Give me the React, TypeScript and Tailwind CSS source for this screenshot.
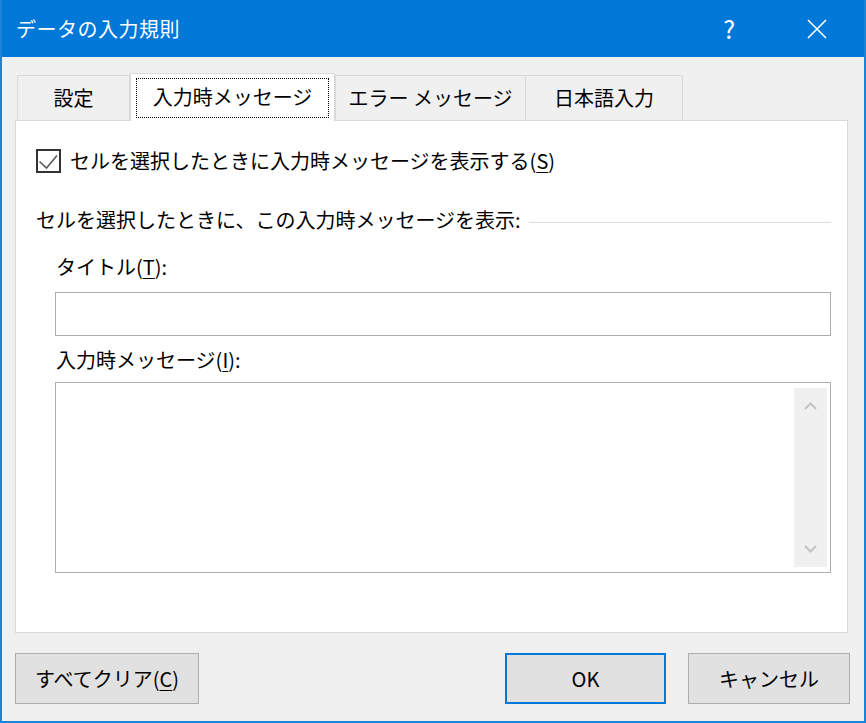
import React from 'react';

const font = { fontFamily: '"Noto Sans CJK JP", "Noto Sans", sans-serif' };

const Key = ({ k }: { k: string }) => (
  <>
    (<span className="underline underline-offset-[3px] decoration-1">{k}</span>)
  </>
);

const Tab = ({ label, w, active = false, className = '' }: { label: string; w: string; active?: boolean; className?: string }) =>
  active ? (
    <div className={`relative z-10 -mb-px flex h-[48px] items-center justify-center border border-b-0 border-[#d9d9d9] bg-white ${w} ${className}`}>
      <div className="pointer-events-none absolute top-[4px] right-[5px] bottom-[3px] left-[5px] border border-dotted border-black" />
      <span className="pb-[2px]">{label}</span>
    </div>
  ) : (
    <div className={`flex h-[45px] items-center justify-center border border-b-0 border-[#d9d9d9] bg-[#f0f0f0] ${w} ${className}`}>
      <span>{label}</span>
    </div>
  );

const Button = ({ children, w, primary = false }: { children: React.ReactNode; w: string; primary?: boolean }) => (
  <button
    type="button"
    className={`flex h-[51px] items-center justify-center bg-[#e1e1e1] text-[20px] text-black ${w} ${
      primary ? 'border-2 border-[#0078d7]' : 'border border-[#adadad]'
    }`}
  >
    {children}
  </button>
);

export default function App() {
  return (
    <div
      style={font}
      className="flex h-[723px] w-[866px] flex-col border-2 border-t-0 border-[#1883d7] bg-[#f0f0f0] text-[20px] leading-[28px] text-black"
    >
      {/* title bar */}
      <div className="flex h-[57px] shrink-0 items-center bg-[#0078d7] pl-[14px] text-white">
        <span className="text-[20px] tracking-[0.5px]">データの入力規則</span>
        <span className="ml-auto mr-[72px] text-[25px] leading-none">?</span>
        <svg width="20" height="20" viewBox="0 0 20 20" className="mr-[37px]">
          <path d="M1 1 L19 19 M19 1 L1 19" stroke="white" strokeWidth="1.6" fill="none" />
        </svg>
      </div>

      <div className="flex flex-1 flex-col pr-[14px] pl-[13px] pt-[16px]">
        {/* tabs */}
        <div className="flex h-[47px] items-end pl-[2px]">
          <Tab label="設定" w="w-[113px]" />
          <Tab label="入力時メッセージ" w="w-[205px]" active />
          <Tab label="エラー メッセージ" w="w-[191px]" />
          <Tab label="日本語入力" w="w-[158px]" className="-ml-px" />
        </div>

        {/* panel */}
        <div className="flex h-[513px] w-[833px] flex-col border border-[#d9d9d9] bg-white pr-[16px] pl-[20px]">
          <label className="mt-[28px] flex h-[24px] items-center">
            <span className="flex h-[24px] w-[25px] items-center justify-center border-2 border-[#333333] bg-white">
              <svg width="21" height="20" viewBox="0 0 21 20">
                <path d="M1.5 10.5 L8.5 17 L19 4.5" stroke="#5a5a5a" strokeWidth="1.6" fill="none" />
              </svg>
            </span>
            <span className="ml-[9px]">
              セルを選択したときに入力時メッセージを表示する<Key k="S" />
            </span>
          </label>

          <div className="mt-[33px] flex h-[28px] items-center">
            <span>セルを選択したときに、この入力時メッセージを表示:</span>
            <div className="ml-[8px] mt-[5px] h-px flex-1 bg-[#dcdcdc]" />
          </div>

          <div className="pl-[19px]">
            <div className="mt-[19px] h-[28px] pl-px">
              タイトル<Key k="T" />:
            </div>
            <div className="mt-[11px] h-[44px] border border-[#adadad] bg-white" />
            <div className="mt-[10px] h-[28px] pl-px">
              入力時メッセージ<Key k="I" />:
            </div>
            <div className="mt-[8px] flex h-[191px] justify-end border border-[#adadad] bg-white py-[5px] pr-[3px]">
              <div className="flex w-[33px] flex-col items-center justify-between bg-[#f0f0f0] py-[14px]">
                <svg width="13" height="8" viewBox="0 0 13 8">
                  <path d="M1 7 L6.5 1.5 L12 7" stroke="#c2c2c2" strokeWidth="2" fill="none" />
                </svg>
                <svg width="13" height="8" viewBox="0 0 13 8">
                  <path d="M1 1 L6.5 6.5 L12 1" stroke="#c2c2c2" strokeWidth="2" fill="none" />
                </svg>
              </div>
            </div>
          </div>
        </div>

        {/* buttons */}
        <div className="mt-[20px] flex items-center">
          <Button w="w-[184px]">
            すべてクリア<Key k="C" />
          </Button>
          <div className="flex-1" />
          <Button w="w-[161px]" primary>
            OK
          </Button>
          <div className="w-[22px]" />
          <Button w="w-[162px]">キャンセル</Button>
        </div>
      </div>
    </div>
  );
}
